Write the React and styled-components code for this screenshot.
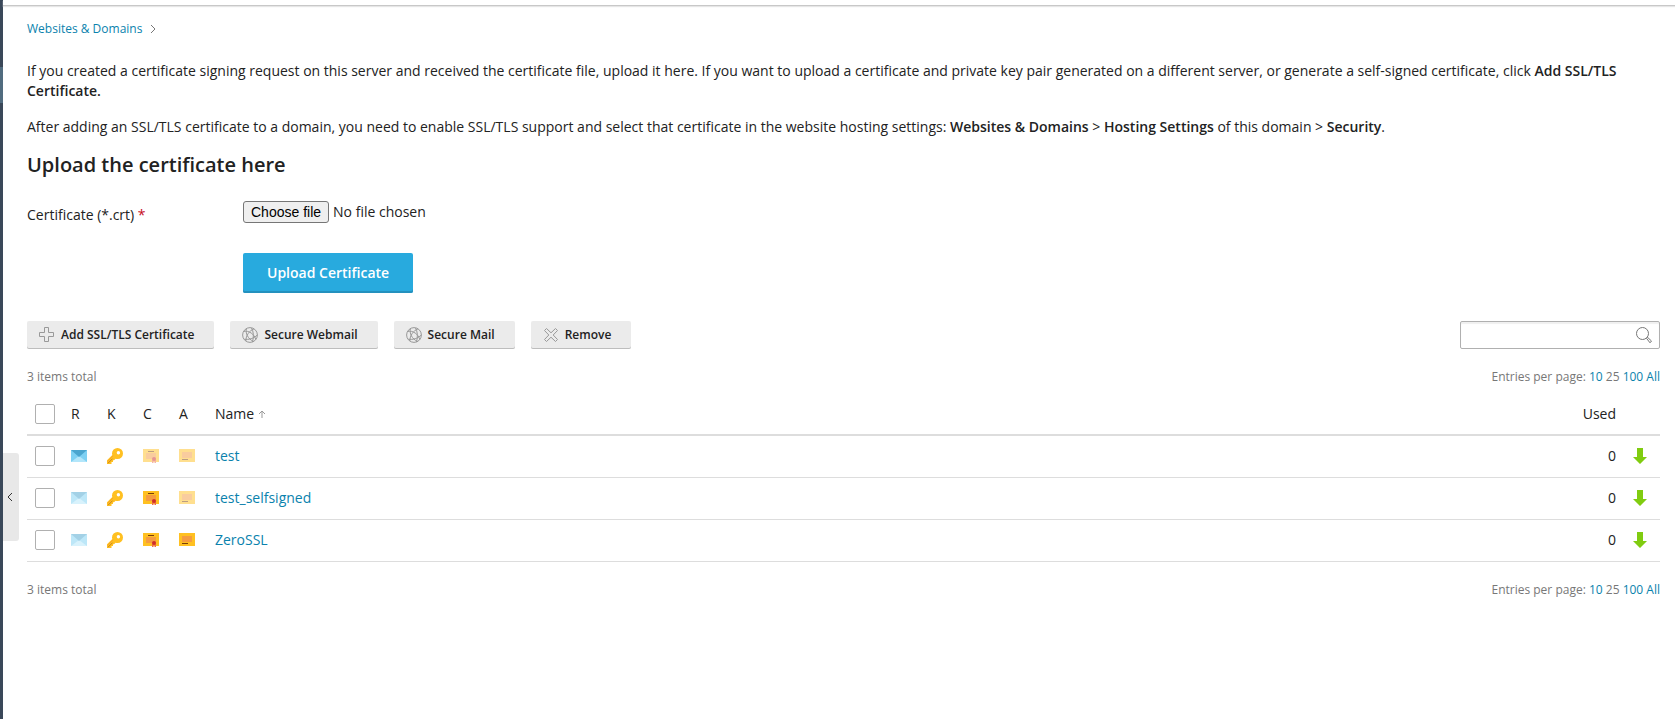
import React, { useRef, useState } from "react";
import styled, { createGlobalStyle } from "styled-components";

const GlobalStyle = createGlobalStyle`
  *, *::before, *::after { box-sizing: border-box; }
  body {
    margin: 0;
    background: #fff;
    color: #222;
    font-family: "Open Sans", "Noto Sans", sans-serif;
    font-size: 14px;
    line-height: 20px;
  }
  button, input { font: inherit; color: inherit; }
  svg { display: block; }
`;

const Shell = styled.div`
  position: relative;
  display: flex;
  min-height: 100vh;
`;

const Rail = styled.nav`
  flex: none;
  width: 3px;
  padding-top: 67px;
  background: #3a4859;
`;

const RailMarker = styled.div`
  height: 36px;
  background: #516c7f;
`;

const CollapseButton = styled.button`
  position: absolute;
  left: 3px;
  top: 453px;
  display: flex;
  align-items: center;
  justify-content: center;
  width: 16px;
  height: 88px;
  padding: 0 2px 0 0;
  border: 0;
  border-radius: 0 3px 3px 0;
  background: #e8e8e8;
  cursor: pointer;
`;

const Page = styled.div`
  flex: 1;
  min-width: 0;
`;

const TopBar = styled.header`
  height: 6px;
  border-bottom: 1px solid #c8c8c8;
  box-shadow: 0 1px 1px #e6e6e6;
`;

const Content = styled.main`
  padding: 13px 15px 24px 24px;
`;

const Link = styled.a`
  color: #0a82ad;
  text-decoration: none;
  &:hover { text-decoration: underline; }
`;

const Breadcrumb = styled.nav`
  display: flex;
  align-items: center;
  gap: 8px;
  margin-bottom: 22px;
  font-size: 12px;
`;

const Paragraph = styled.p`
  margin: 0 0 16px;
`;

const Strong = styled.strong`
  font-weight: 600;
`;

const Title = styled.h3`
  margin: 0 0 23px;
  font-size: 20px;
  line-height: 24px;
  font-weight: 600;
`;

const UploadForm = styled.form`
  display: grid;
  grid-template-columns: 200px 1fr;
  column-gap: 16px;
  row-gap: 28px;
  margin-bottom: 28px;
`;

const FieldLabel = styled.label`
  padding-top: 5px;
`;

const Required = styled.span`
  color: #c60b1e;
`;

const FilePicker = styled.div`
  display: flex;
  align-items: flex-start;
  gap: 4px;
  padding-top: 1px;
`;

const FileName = styled.span`
  line-height: 22px;
`;

const HiddenFile = styled.input`
  display: none;
`;

const ChooseButton = styled.button`
  height: 22px;
  padding: 0 7px;
  border: 1px solid #767676;
  border-radius: 3px;
  background: #efefef;
  color: #000;
  font-family: "Liberation Sans", Arial, sans-serif;
  font-size: 14px;
  line-height: 20px;
`;

const PrimaryButton = styled.button`
  grid-column: 2;
  justify-self: start;
  height: 40px;
  padding: 0 24px;
  border: 0;
  border-radius: 2px;
  background: #28aade;
  box-shadow: inset 0 -2px #2491be;
  color: #fff;
  font-weight: 600;
  cursor: pointer;
`;

const Toolbar = styled.div`
  display: flex;
  justify-content: space-between;
  margin-bottom: 18px;
`;

const Actions = styled.div`
  display: flex;
  gap: 16px;
`;

const ActionButton = styled.button`
  display: flex;
  align-items: center;
  gap: 6px;
  height: 28px;
  padding: 0 20px 0 12px;
  border: 0;
  border-radius: 2px;
  background: #ebebeb;
  box-shadow: inset 0 -1px #bdbdbd;
  font-size: 12px;
  font-weight: 600;
  cursor: pointer;
`;

const SearchBox = styled.form`
  display: flex;
  align-items: center;
  width: 200px;
  height: 28px;
  padding-right: 6px;
  border: 1px solid #b0b0b0;
  border-radius: 2px;
  box-shadow: inset 0 2px 1px #f0f0f0;
`;

const SearchInput = styled.input`
  flex: 1;
  min-width: 0;
  height: 24px;
  padding: 0 8px;
  border: 0;
  outline: 0;
  background: transparent;
`;

const SearchButton = styled.button`
  padding: 0;
  border: 0;
  background: none;
  cursor: pointer;
`;

const Summary = styled.div`
  display: flex;
  justify-content: space-between;
  color: #777;
  font-size: 12px;
`;

const Table = styled.table`
  width: 100%;
  margin: 5px 0 18px;
  border-collapse: separate;
  border-spacing: 0;
  table-layout: fixed;
`;

const Cell = styled.td`
  width: ${(p) => (p.$narrow ? "36px" : "auto")};
  height: 42px;
  padding: 0 8px 1px;
  border-bottom: 1px solid #ddd;
  text-align: ${(p) => (p.$right ? "right" : "left")};
`;

const HeadCell = styled(Cell)`
  height: 44px;
  padding: 1px 8px 0;
  border-bottom-width: 2px;
  font-weight: 400;
`;

const SortLabel = styled.span`
  display: flex;
  align-items: center;
  gap: 4px;
`;

const Checkbox = styled.input`
  display: block;
  appearance: none;
  width: 20px;
  height: 20px;
  margin: 0;
  border: 1px solid #b0b0b0;
  border-radius: 2px;
  background: #fff;
  &:checked { background: #28aade; }
`;

const Glyph = styled.svg`
  opacity: ${(p) => (p.$off ? 0.5 : 1)};
`;

function MailIcon({ off }) {
  return (
    <Glyph $off={off} width="16" height="16" viewBox="0 0 16 16">
      <path fill="#7dd0f3" d="M0 2h16v12H0z" />
      <path fill="#b3e6fa" d="M0 14l8-6 8 6z" />
      <path fill="#4aa5cf" d="M0 2h16L8 9z" />
    </Glyph>
  );
}

function KeyIcon() {
  return (
    <Glyph width="16" height="16" viewBox="0 0 16 16">
      <path
        fill="#ffc021"
        fillRule="evenodd"
        d="M10.500 0a5.500 5.500 0 0 1 0 11c-.7 0-1.300-.1-1.900-.3L7 12.300H6V14H4.500v2H0v-3.800l5.300-5.300C5.100 6.500 5 6 5 5.500A5.500 5.500 0 0 1 10.500 0zm.9 3a1.700 1.700 0 1 0 0 3.400 1.700 1.700 0 0 0 0-3.400z"
      />
      <path fill="none" stroke="#f7a529" strokeWidth="1" d="M.6 13.400L6.200 7.800" />
      <path fill="none" stroke="#b87420" strokeWidth=".8" d="M1 15.200L5.500 10.700" />
    </Glyph>
  );
}

function CertIcon({ off }) {
  return (
    <Glyph $off={off} width="16" height="16" viewBox="0 0 16 16">
      <path fill="#ffc021" d="M0 1h16v13H0z" />
      <path fill="#f59b40" d="M3 5h10v6H3z" />
      <path fill="#7a3d0a" d="M5 3h6v1H5z" />
      <path fill="#ee6b4d" d="M9 12h1.500v3H9zM11.500 12H13v3h-1.500z" />
      <circle cx="11" cy="11" r="2" fill="#cf2d2a" />
    </Glyph>
  );
}

function AuthorityIcon({ off }) {
  return (
    <Glyph $off={off} width="16" height="16" viewBox="0 0 16 16">
      <path fill="#ffc021" d="M0 1h16v13H0z" />
      <path fill="#f59b40" d="M3 4h10v6H3z" />
      <path fill="#7a3d0a" d="M3 11h6v1H3z" />
    </Glyph>
  );
}

function DownloadIcon() {
  return (
    <Glyph width="16" height="16" viewBox="0 0 16 16">
      <path fill="#80cc10" d="M5 0h6v9h4l-7 7-7-7h4z" />
    </Glyph>
  );
}

function PlusIcon() {
  return (
    <svg width="16" height="16" viewBox="0 0 16 16" fill="none" stroke="#999">
      <path d="M5.500 .5h4v5h5v4h-5v5h-4v-5h-5v-4h5z" />
    </svg>
  );
}

function GlobeIcon() {
  return (
    <svg width="16" height="16" viewBox="0 0 16 16" fill="none" stroke="#999">
      <circle cx="8" cy="8" r="7.400" />
      <path d="M1.500 4.500C7 3 12.500 7.500 13.800 12.500M4.500 1.500C3 6 6 12 11.500 14.500M12 1.800C7 4 4 8.500 3.800 14M2.500 12.200c4 .8 9.500-.7 12.700-4.200M9.500 1C11.500 4 12 10 10.500 15" />
    </svg>
  );
}

function RemoveIcon() {
  return (
    <svg width="16" height="16" viewBox="0 0 16 16" fill="none" stroke="#999">
      <path
        strokeLinejoin="round"
        d="M1.500 3.500l2-2L8 5.800l4.500-4.300 2 2L10.200 8l4.300 4.500-2 2L8 10.200l-4.500 4.300-2-2L5.800 8z"
      />
    </svg>
  );
}

function SearchIcon() {
  return (
    <svg width="18" height="18" viewBox="0 0 18 18" fill="none" stroke="#777">
      <circle cx="7.500" cy="7.500" r="6" />
      <path d="M11.500 12.300l1-1 4 3.700-1.500 1.800z" />
    </svg>
  );
}

const actions = [
  { label: "Add SSL/TLS Certificate", Icon: PlusIcon },
  { label: "Secure Webmail", Icon: GlobeIcon },
  { label: "Secure Mail", Icon: GlobeIcon },
  { label: "Remove", Icon: RemoveIcon },
];

const certificates = [
  { name: "test", request: true, cert: false, authority: false },
  { name: "test_selfsigned", request: false, cert: true, authority: false },
  { name: "ZeroSSL", request: false, cert: true, authority: true },
];

function ListSummary() {
  return (
    <Summary>
      <span>3 items total</span>
      <span>
        Entries per page: <Link href="#10">10</Link> 25 <Link href="#100">100</Link>{" "}
        <Link href="#all">All</Link>
      </span>
    </Summary>
  );
}

export default function App() {
  const fileRef = useRef(null);
  const [fileName, setFileName] = useState("No file chosen");

  return (
    <Shell>
      <GlobalStyle />
      <Rail><RailMarker /></Rail>
      <CollapseButton aria-label="Collapse sidebar">
        <svg width="6" height="10" viewBox="0 0 6 10" fill="none" stroke="#333">
          <path d="M5 1L1 5l4 4" />
        </svg>
      </CollapseButton>
      <Page>
        <TopBar />
        <Content>
          <Breadcrumb>
            <Link href="#domains">Websites &amp; Domains</Link>
            <svg width="6" height="10" viewBox="0 0 6 10" fill="none" stroke="#777">
              <path d="M1 1l4 4-4 4" />
            </svg>
          </Breadcrumb>
          <Paragraph>
            If you created a certificate signing request on this server and received the
            certificate file, upload it here. If you want to upload a certificate and private key
            pair generated on a different server, or generate a self-signed certificate, click{" "}
            <Strong>Add SSL/TLS Certificate.</Strong>
          </Paragraph>
          <Paragraph>
            After adding an SSL/TLS certificate to a domain, you need to enable SSL/TLS support and
            select that certificate in the website hosting settings:{" "}
            <Strong>Websites &amp; Domains</Strong> &gt; <Strong>Hosting Settings</Strong> of this
            domain &gt; <Strong>Security</Strong>.
          </Paragraph>
          <Title>Upload the certificate here</Title>
          <UploadForm onSubmit={(e) => e.preventDefault()}>
            <FieldLabel htmlFor="certificate-file">
              Certificate (*.crt) <Required>*</Required>
            </FieldLabel>
            <FilePicker>
              <HiddenFile
                ref={fileRef}
                id="certificate-file"
                type="file"
                accept=".crt"
                onChange={(e) => setFileName(e.target.files[0]?.name ?? "No file chosen")}
              />
              <ChooseButton type="button" onClick={() => fileRef.current.click()}>
                Choose file
              </ChooseButton>
              <FileName>{fileName}</FileName>
            </FilePicker>
            <PrimaryButton type="submit">Upload Certificate</PrimaryButton>
          </UploadForm>
          <Toolbar>
            <Actions>
              {actions.map(({ label, Icon }) => (
                <ActionButton key={label} type="button">
                  <Icon />
                  {label}
                </ActionButton>
              ))}
            </Actions>
            <SearchBox role="search" onSubmit={(e) => e.preventDefault()}>
              <SearchInput type="text" aria-label="Search certificates" />
              <SearchButton aria-label="Search"><SearchIcon /></SearchButton>
            </SearchBox>
          </Toolbar>
          <ListSummary />
          <Table>
            <thead>
              <tr>
                <HeadCell as="th" $narrow>
                  <Checkbox type="checkbox" aria-label="Select all" />
                </HeadCell>
                <HeadCell as="th" $narrow>R</HeadCell>
                <HeadCell as="th" $narrow>K</HeadCell>
                <HeadCell as="th" $narrow>C</HeadCell>
                <HeadCell as="th" $narrow>A</HeadCell>
                <HeadCell as="th">
                  <SortLabel>
                    Name
                    <svg width="8" height="8" viewBox="0 0 8 8" fill="none" stroke="#999">
                      <path d="M4 8V1M1 4l3-3 3 3" />
                    </svg>
                  </SortLabel>
                </HeadCell>
                <HeadCell as="th" $right>Used</HeadCell>
                <HeadCell as="th" $narrow />
              </tr>
            </thead>
            <tbody>
              {certificates.map((c) => (
                <tr key={c.name}>
                  <Cell><Checkbox type="checkbox" aria-label={`Select ${c.name}`} /></Cell>
                  <Cell><MailIcon off={!c.request} /></Cell>
                  <Cell><KeyIcon /></Cell>
                  <Cell><CertIcon off={!c.cert} /></Cell>
                  <Cell><AuthorityIcon off={!c.authority} /></Cell>
                  <Cell><Link href={`#${c.name}`}>{c.name}</Link></Cell>
                  <Cell $right>0</Cell>
                  <Cell>
                    <Link href={`#download-${c.name}`} aria-label={`Download ${c.name}`}>
                      <DownloadIcon />
                    </Link>
                  </Cell>
                </tr>
              ))}
            </tbody>
          </Table>
          <ListSummary />
        </Content>
      </Page>
    </Shell>
  );
}
